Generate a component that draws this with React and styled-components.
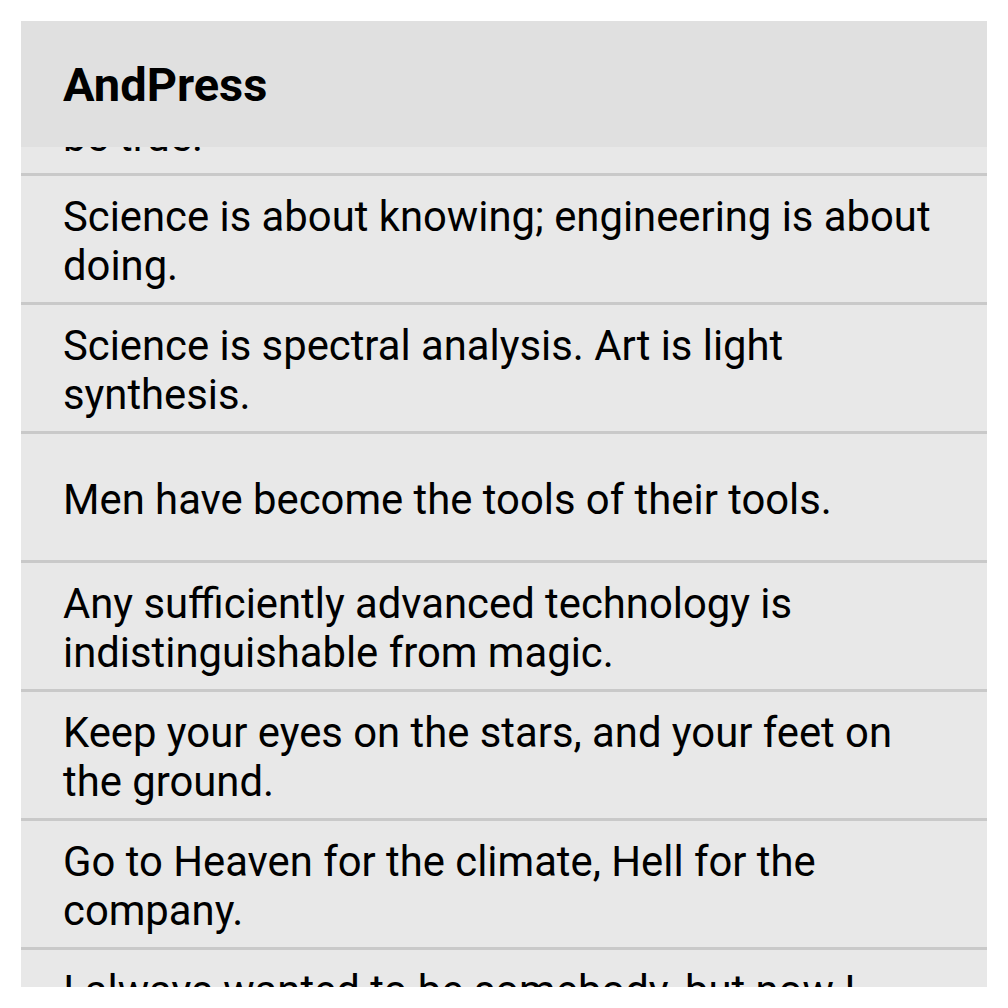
import React from "react";
import styled, { createGlobalStyle } from "styled-components";

const QUOTES = [
  "Nothing in all this world is too wonderful to be\u00a0true.",
  "Science is about knowing; engineering is about doing.",
  "Science is spectral analysis. Art is light synthesis.",
  "Men have become the tools of their tools.",
  "Any sufficiently advanced technology is indistinguishable from magic.",
  "Keep your eyes on the stars, and your feet on the ground.",
  "Go to Heaven for the climate, Hell for the company.",
  "I always wanted to be somebody, but now I realize I should have been more specific.",
];

// how far the list has been scrolled under the app bar
const SCROLL_OFFSET = 100;

function App() {
  return (
    <>
      <GlobalStyle />
      <Screen>
        <AppBar>
          <Title>AndPress</Title>
        </AppBar>
        <QuoteList>
          <Track $offset={SCROLL_OFFSET}>
            {QUOTES.map((quote) => (
              <QuoteRow key={quote}>
                <QuoteText>{quote}</QuoteText>
              </QuoteRow>
            ))}
          </Track>
        </QuoteList>
      </Screen>
    </>
  );
}

const GlobalStyle = createGlobalStyle`
  html, body {
    margin: 0;
    padding: 0;
    background: #ffffff;
  }
  body {
    font-family: Roboto, "Noto Sans", sans-serif;
    -webkit-font-smoothing: antialiased;
  }
`;

const Screen = styled.div`
  margin: 21px;
  width: 966px;
  height: 966px;
  display: flex;
  flex-direction: column;
  overflow: hidden;
  background: #e8e8e8;
`;

const AppBar = styled.header`
  flex: 0 0 126px;
  display: flex;
  align-items: center;
  padding: 0 42px;
  background: #e0e0e0;
  position: relative;
  z-index: 1;
`;

const Title = styled.h1`
  margin: 0;
  font-family: Roboto, sans-serif;
  font-size: 47px;
  font-weight: 700;
  color: #000000;
`;

const QuoteList = styled.div`
  flex: 1;
  overflow: hidden;
`;

const Track = styled.div`
  margin-top: ${(p) => -p.$offset}px;
`;

const QuoteRow = styled.div`
  min-height: 122px;
  display: flex;
  align-items: center;
  padding: 4px 42px 0;
  border-bottom: 3px solid #c9c9c9;
  box-sizing: content-box;
`;

const QuoteText = styled.div`
  font-family: Roboto, sans-serif;
  font-size: 41.8px;
  line-height: 49px;
  color: #000000;
`;

export default App;
